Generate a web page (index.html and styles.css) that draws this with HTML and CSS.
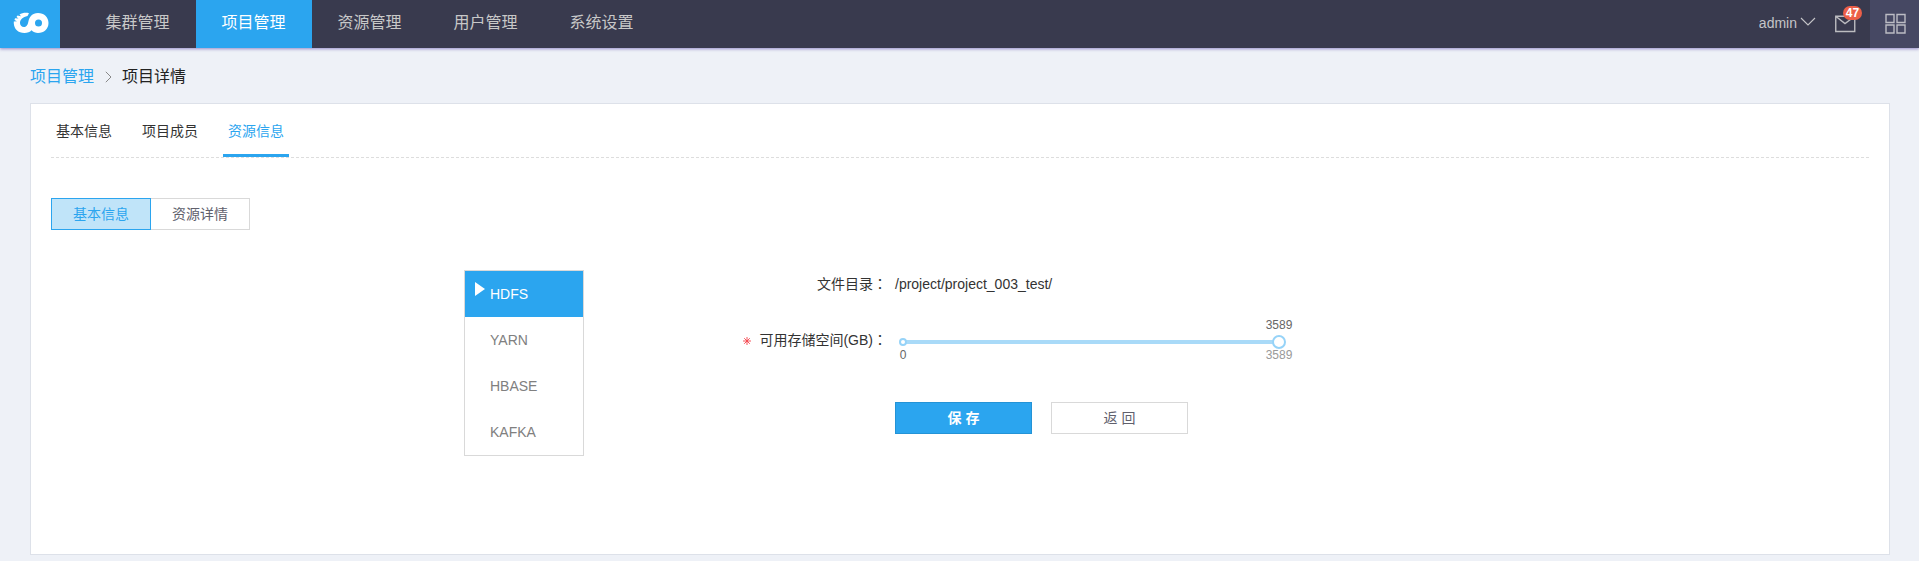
FILE: index.html
```html
<!DOCTYPE html>
<html lang="zh-CN">
<head>
<meta charset="utf-8">
<title>项目详情</title>
<link rel="stylesheet" href="styles.css">
</head>
<body>
<header class="topbar">
  <a class="logo">
    <svg width="36" height="22" viewBox="0 0 36 22">
      <path d="M16 1.200C13 .4 9 .8 6.500 2.500L8 4.200L4.500 3.500L3.500 5L5.500 6.500L2 6.200L1.500 8L4 9.200L.8 9.500L.8 11.500C1.200 17 5 21 11.500 21C14.500 21 17 20 18.500 18.200C20.300 20 22.500 21 25 21C31 21 35.500 17 35.500 11C35.500 5 31 1 25 1C19 1 16.500 5 15.500 9C14.800 12.500 13.800 15 11 15C8.500 15 7 13.200 7 11C7 7.500 10 4.800 14.500 4Z" fill="#fff"/>
      <circle cx="25.500" cy="11" r="3.500" fill="#2ba5ef"/>
    </svg>
  </a>
  <nav class="nav">
    <a class="nav-item">集群管理</a>
    <a class="nav-item nav-active">项目管理</a>
    <a class="nav-item">资源管理</a>
    <a class="nav-item">用户管理</a>
    <a class="nav-item">系统设置</a>
  </nav>
  <div class="tools">
    <span class="user">admin</span>
    <svg class="caret" width="16" height="10" viewBox="0 0 16 10"><path d="M1 1L8 8L15 1" fill="none" stroke="#c5c5c8" stroke-width="1.100"/></svg>
    <span class="mail">
      <svg width="21" height="18" viewBox="0 0 21 18"><path d="M.75 1.250H19.750V16.500H.75ZM1 1.500L10 8.500L19.500 1.500" fill="none" stroke="#bcbcc0" stroke-width="1.400"/></svg>
      <span class="badge">47</span>
    </span>
    <span class="apps">
      <svg width="21" height="21" viewBox="0 0 21 21"><path d="M1 1.500H9V9.500H1ZM12 1.500H20V9.500H12ZM1 12H9V20H1ZM12 12H20V20H12Z" fill="none" stroke="#bcbcc4" stroke-width="1.400"/></svg>
    </span>
  </div>
</header>
<div class="crumbs">
  <a class="crumb-link">项目管理</a>
  <svg class="crumb-sep" width="7" height="12" viewBox="0 0 7 12"><path d="M.8 .8L6 6L.8 11.200" fill="none" stroke="#888" stroke-width="1"/></svg>
  <span>项目详情</span>
</div>
<main class="card">
  <div class="tabs">
    <a class="tab">基本信息</a>
    <a class="tab">项目成员</a>
    <a class="tab tab-active">资源信息</a>
  </div>
  <div class="switch">
    <a class="switch-item switch-active">基本信息</a>
    <a class="switch-item">资源详情</a>
  </div>
  <div class="content">
    <ul class="menu">
      <li class="menu-item menu-active"><svg class="arrow" width="10" height="14" viewBox="0 0 10 14"><path d="M0 0L10 7L0 14Z" fill="#fff"/></svg>HDFS</li>
      <li class="menu-item">YARN</li>
      <li class="menu-item">HBASE</li>
      <li class="menu-item">KAFKA</li>
    </ul>
    <form class="form">
      <span class="label">文件目录<b class="colon" lang="zh-TW">：</b></span>
      <span class="value">/project/project_003_test/</span>
      <span class="label label-space"><svg class="star" width="8" height="8" viewBox="0 0 8 8"><path d="M4 0V8M0 4H8M1.200 1.200L6.800 6.800M6.800 1.200L1.200 6.800" stroke="#f5444c" stroke-width=".9"/></svg>可用存储空间(GB)<b class="colon" lang="zh-TW">：</b></span>
      <div class="slider">
        <div class="track"><i class="dot"></i><i class="knob"></i></div>
        <span class="mark mark-now">3589</span>
        <span class="mark mark-min">0</span>
        <span class="mark mark-max">3589</span>
      </div>
      <div class="actions">
        <button type="button" class="btn btn-primary">保 存</button>
        <button type="button" class="btn">返 回</button>
      </div>
    </form>
  </div>
</main>
</body>
</html>
```
FILE: styles.css
```css
* { box-sizing: border-box; }
body {
  margin: 0;
  height: 561px;
  overflow: hidden;
  background: #eef1f7;
  color: #333;
  font: 14px/20px "Liberation Sans", "Noto Sans CJK SC", sans-serif;
}
.topbar {
  display: flex;
  height: 48px;
  background: #393a4e;
  box-shadow: 0 1px 3px rgba(90, 70, 170, .6);
}
.logo {
  display: flex;
  width: 60px;
  padding: 12px 0 0 12.500px;
  background: #2ba5ef;
}
.nav { display: flex; padding-left: 20px; }
.nav-item {
  width: 116px;
  padding-right: 1px;
  text-align: center;
  font-size: 16px;
  line-height: 45px;
  color: #c8c8c8;
}
.nav-active { background: #2ba5ef; color: #fff; }
.tools { display: flex; margin-left: auto; color: #c5c5c8; }
.user { line-height: 46px; }
.caret { margin: 17px 0 0 3px; }
.mail { position: relative; margin: 15px 14px 0 19px; }
.mail svg { display: block; }
.badge {
  position: absolute;
  left: 8px;
  top: -9px;
  width: 19px;
  height: 14px;
  border-radius: 7px;
  background: #ec5f48;
  color: #fff;
  font-weight: bold;
  font-size: 12px;
  line-height: 14px;
  text-align: center;
}
.apps { width: 49px; padding: 13px 0 0 15px; background: #464863; }
.apps svg { display: block; }
.crumbs {
  display: flex;
  align-items: center;
  height: 55px;
  padding: 2px 0 0 30px;
  font-size: 16px;
  color: #222;
}
.crumb-link { color: #2ba5ef; }
.crumb-sep { margin: 0 10px 0 11px; }
.card {
  width: 1860px;
  height: 452px;
  margin-left: 30px;
  padding: 0 20px;
  border: 1px solid #dde1e9;
  background: #fff;
}
.tabs { display: flex; gap: 20px; height: 54px; border-bottom: 1px dashed #ddd; }
.tab { height: 53px; padding: 0 5px; line-height: 54px; }
.tab-active { border-bottom: 3px solid #2ba5ef; color: #2ba5ef; }
.switch { display: flex; margin-top: 40px; }
.switch-item {
  width: 99px;
  height: 32px;
  border: 1px solid #d9d9d9;
  border-left: 0;
  color: #60606c;
  line-height: 31px;
  text-align: center;
}
.switch-active { width: 100px; border: 1px solid #2ba5ef; background: #c0e4f9; color: #2ba5ef; }
.content { display: flex; align-items: flex-start; margin-top: 40px; padding-left: 413px; }
.menu {
  width: 120px;
  margin: 0;
  padding: 0;
  border: 1px solid #d9d9d9;
  list-style: none;
  color: #808080;
}
.menu-item { position: relative; height: 46px; padding-left: 25px; line-height: 46px; }
.menu-active { background: #2ba5ef; color: #fff; }
.arrow { position: absolute; left: 10px; top: 11px; }
.form {
  display: grid;
  grid-template-columns: 303px auto;
  grid-template-rows: 30px 82px auto;
  column-gap: 8px;
}
.label { justify-self: end; line-height: 29px; }
.value { line-height: 29px; }
.label-space { padding-top: 26px; }
.colon { font-family: "Noto Sans CJK TC", sans-serif; font-weight: normal; line-height: 1; }
.star { margin-right: 8px; }
.slider { position: relative; padding: 40px 0 0 8px; }
.track { position: relative; width: 376px; height: 4px; background: #a9daf8; }
.dot {
  position: absolute;
  left: -4px;
  top: -2px;
  width: 8px;
  height: 8px;
  border: 2px solid #96d3f8;
  border-radius: 50%;
  background: #fff;
}
.knob {
  position: absolute;
  right: -7px;
  top: -5px;
  width: 14px;
  height: 14px;
  border: 2px solid #96d3f8;
  border-radius: 50%;
  background: #fff;
}
.mark { position: absolute; width: 40px; text-align: center; font-size: 12px; line-height: 14px; color: #666; }
.mark-now { left: 364px; top: 18px; }
.mark-min { left: -12px; top: 48px; }
.mark-max { left: 364px; top: 48px; color: #999; }
.actions { grid-column: 2; display: flex; gap: 19px; margin-top: 20px; }
.btn {
  width: 137px;
  height: 32px;
  padding: 0;
  border: 1px solid #d9d9d9;
  background: #fff;
  color: #60606c;
  font: inherit;
}
.btn-primary { border-color: #2493d6; background: #2ba5ef; color: #fff; font-weight: bold; }
```
